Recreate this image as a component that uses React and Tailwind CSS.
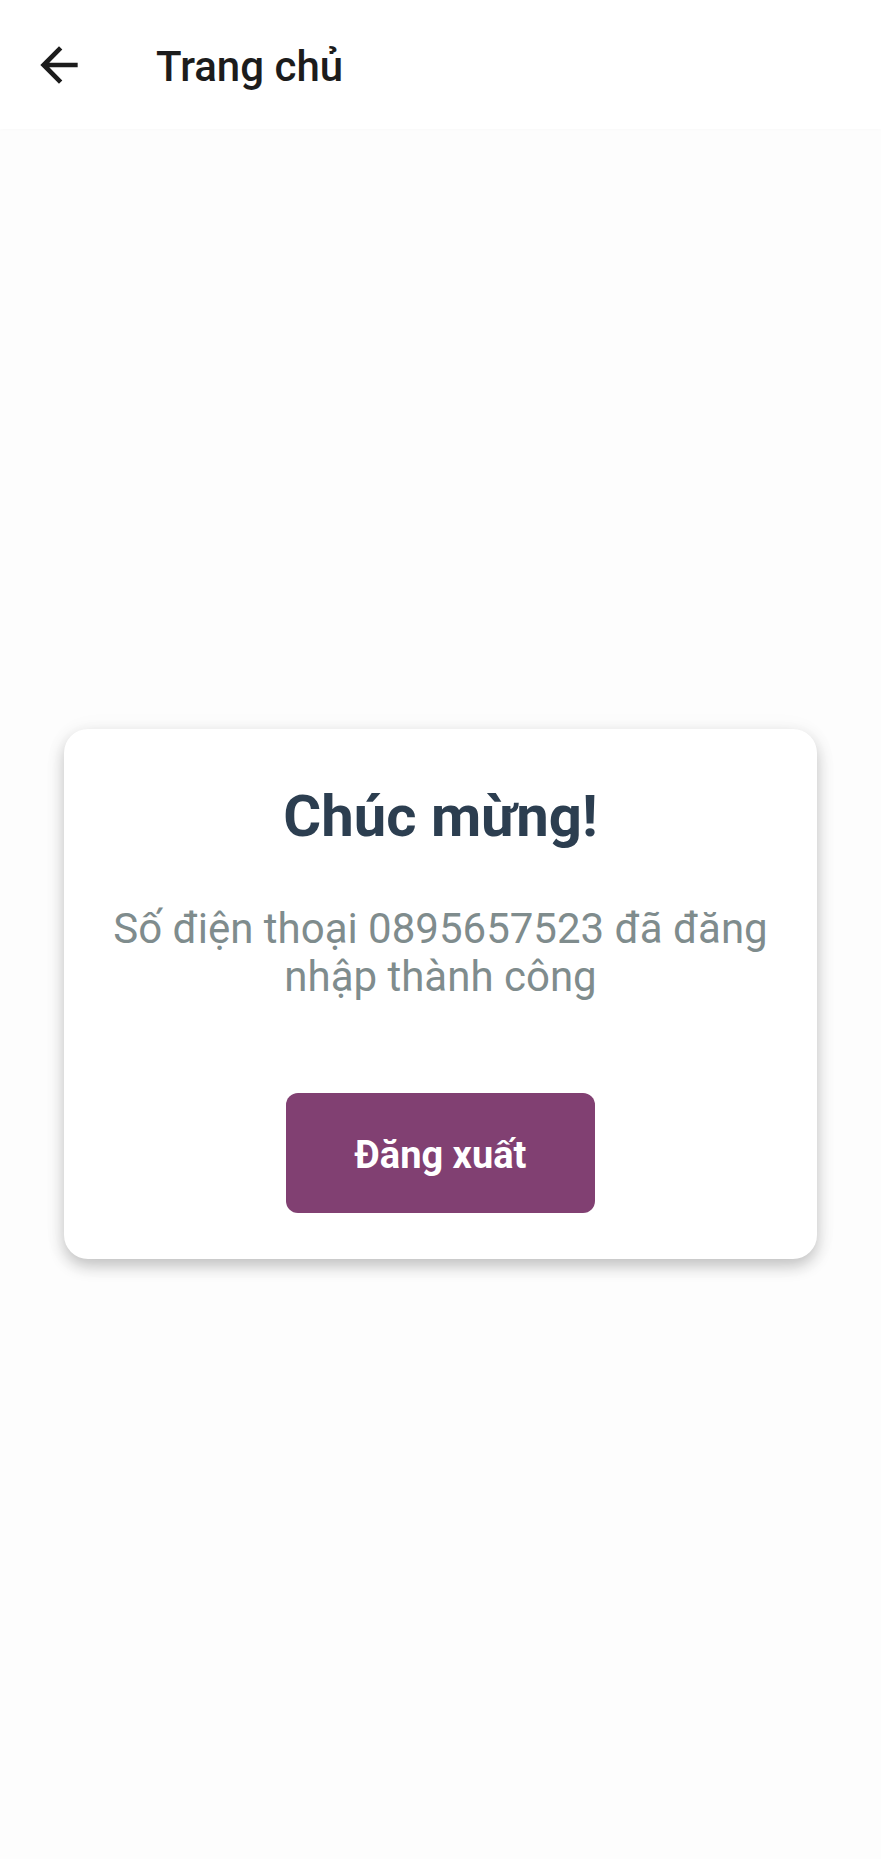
export default function App() {
  return (
    <div className="flex min-h-screen flex-col bg-[#fdfdfd] font-['Roboto',sans-serif]">
      <header className="flex h-[129px] items-center bg-white px-[31px] shadow-[0_1px_3px_rgba(0,0,0,0.02)]">
        <button type="button" aria-label="Quay lại" className="flex size-14 items-center justify-center">
          <svg viewBox="0 0 24 24" className="size-14 shrink-0 fill-[#1c1c1c]" aria-hidden="true">
            <path d="M20 11H7.83l5.59-5.59L12 4l-8 8 8 8 1.41-1.41L7.83 13H20v-2z" />
          </svg>
        </button>
        <h1 className="ml-[69px] pt-1 text-[42px] leading-[48px] font-medium text-[#1c1c1c]">Trang chủ</h1>
      </header>
      <main className="flex flex-1 items-center justify-center px-16">
        <section className="flex w-full flex-col items-center rounded-[24px] bg-white px-12 pt-12 pb-[46px] shadow-[0_7px_16px_rgba(0,0,0,0.23),0_2px_30px_rgba(0,0,0,0.03)]">
          <h2 className="text-[58px] leading-[78px] font-bold text-[#2c3e50]">Chúc mừng!</h2>
          <p className="mt-[50px] text-center text-[42px] leading-[48px] text-[#7f8c8d]">
            Số điện thoại 0895657523 đã đăng nhập thành công
          </p>
          <button type="button" className="mt-[92px] h-[120px] rounded-[12px] bg-[#814072] px-[69px] pt-1 text-[38px] font-bold text-white">
            Đăng xuất
          </button>
        </section>
      </main>
    </div>
  );
}
